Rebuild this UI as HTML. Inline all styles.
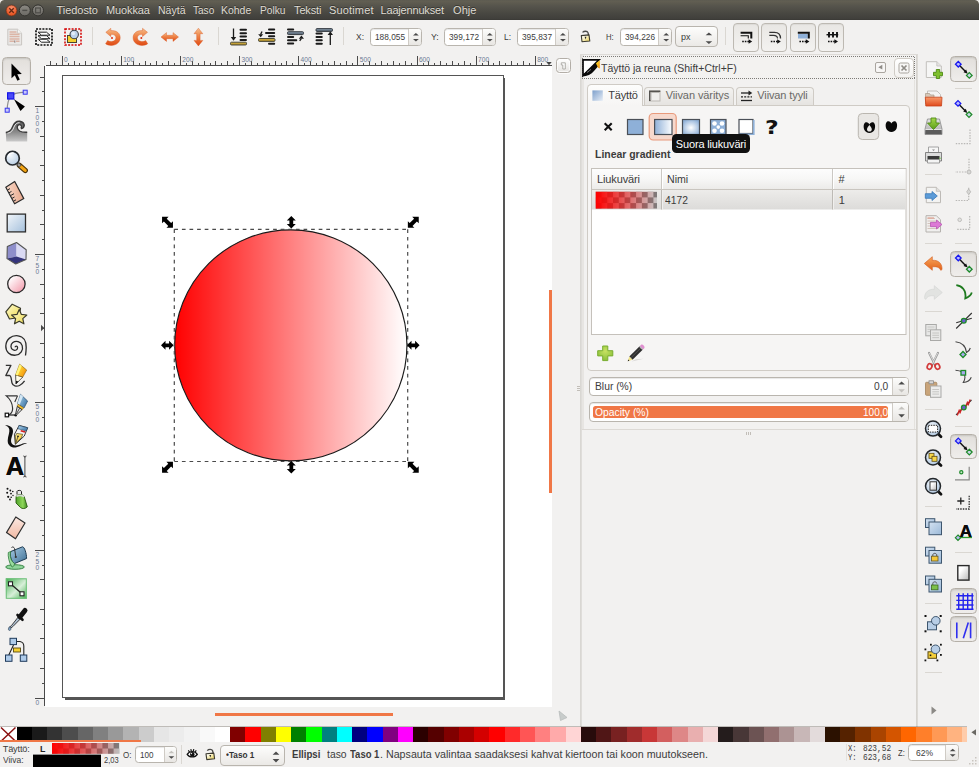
<!DOCTYPE html>
<html><head><meta charset="utf-8"><title>Inkscape</title>
<style>
*{box-sizing:border-box;margin:0;padding:0}
html,body{width:979px;height:767px;overflow:hidden}
body{background:#f2f1f0;font-family:"Liberation Sans","DejaVu Sans",sans-serif;font-size:11px;color:#3c3c3c;position:relative}
.a{position:absolute}
svg{position:absolute;overflow:visible}
.t{position:absolute;white-space:nowrap;line-height:1}
#titlebar{left:0;top:0;width:979px;height:20px;background:linear-gradient(#5d5b51 0%,#615e52 7%,#56544c 30%,#494842 65%,#403f3b 94%,#393834 100%)}
.menu{color:#dfdbd2;text-shadow:0 -1px 0 rgba(0,0,0,.5)}
.wb{position:absolute;width:12px;height:12px;border-radius:6px;top:5px}
.spin{position:absolute;background:#fff;border:1px solid #b9b5ae;border-radius:3.5px;box-shadow:inset 0 1px 1px rgba(0,0,0,.10)}
.spin .sp{position:absolute;right:0;top:0;bottom:0;width:12px;border-left:1px solid #cfcbc5;background:linear-gradient(#fcfcfb,#e8e6e3);border-radius:0 2.5px 2.5px 0}
.btn{position:absolute;border:1px solid #b5b0a8;border-radius:4px;background:linear-gradient(#e2dfdb,#efedeb);box-shadow:inset 0 1px 2px rgba(0,0,0,.13)}
.sep{position:absolute;background:#dad7d2;width:1px}
.hsep{position:absolute;background:#dad7d2;height:1px}
</style></head><body>

<div id="titlebar" class="a"></div>
<div class="a" style="left:0;top:0;width:4px;height:4px;background:radial-gradient(circle at 4px 4px,transparent 3.400px,#e8e6e2 4.200px)"></div>
<div class="a" style="right:0;top:0;width:4px;height:4px;background:radial-gradient(circle at 0 4px,transparent 3.400px,#e8e6e2 4.200px)"></div>
<svg style="left:0;top:0" width="60" height="20">
<defs><radialGradient id="wc" cx=".5" cy=".3" r=".75"><stop offset="0" stop-color="#f7916f"/><stop offset=".7" stop-color="#ea5a28"/><stop offset="1" stop-color="#dc4c1a"/></radialGradient>
<linearGradient id="wg" x1="0" y1="0" x2="0" y2="1"><stop offset="0" stop-color="#8b8983"/><stop offset="1" stop-color="#6b6964"/></linearGradient></defs>
<circle cx="11.500" cy="10.500" r="5.500" fill="url(#wc)" stroke="#5a3020" stroke-width="1" stroke-opacity=".75"/>
<path d="M9.300 8.300L13.700 12.700M13.700 8.300L9.300 12.700" stroke="#4a1a08" stroke-width="1.300" fill="none" stroke-opacity=".85"/>
<circle cx="24.800" cy="10.400" r="5.500" fill="url(#wg)" stroke="#34332f" stroke-width="1"/>
<path d="M22.300 10.400H27.300" stroke="#4e4d49" stroke-width="1.400" fill="none"/>
<circle cx="38" cy="10.400" r="5.500" fill="url(#wg)" stroke="#34332f" stroke-width="1"/>
<rect x="35.600" y="8" width="4.800" height="4.800" stroke="#4e4d49" stroke-width="1.200" fill="none"/>
</svg>
<span class="t" style="left:56.50px;top:5px;font-size:11px;letter-spacing:-0.042px;color:#dfdbd2;text-shadow:0 -1px 0 rgba(0,0,0,.4);">Tiedosto</span>
<span class="t" style="left:106.00px;top:5px;font-size:11px;letter-spacing:-0.107px;color:#dfdbd2;text-shadow:0 -1px 0 rgba(0,0,0,.4);">Muokkaa</span>
<span class="t" style="left:157.50px;top:5px;font-size:11px;transform:scaleX(0.9565);transform-origin:0 0;color:#dfdbd2;text-shadow:0 -1px 0 rgba(0,0,0,.4);">Näytä</span>
<span class="t" style="left:192.50px;top:5px;font-size:11px;transform:scaleX(0.9140);transform-origin:0 0;color:#dfdbd2;text-shadow:0 -1px 0 rgba(0,0,0,.4);">Taso</span>
<span class="t" style="left:221.25px;top:5px;font-size:11px;transform:scaleX(0.9509);transform-origin:0 0;color:#dfdbd2;text-shadow:0 -1px 0 rgba(0,0,0,.4);">Kohde</span>
<span class="t" style="left:259.50px;top:5px;font-size:11px;transform:scaleX(0.9262);transform-origin:0 0;color:#dfdbd2;text-shadow:0 -1px 0 rgba(0,0,0,.4);">Polku</span>
<span class="t" style="left:294.00px;top:5px;font-size:11px;letter-spacing:-0.125px;color:#dfdbd2;text-shadow:0 -1px 0 rgba(0,0,0,.4);">Teksti</span>
<span class="t" style="left:329.00px;top:5px;font-size:11px;letter-spacing:0.154px;color:#dfdbd2;text-shadow:0 -1px 0 rgba(0,0,0,.4);">Suotimet</span>
<span class="t" style="left:380.50px;top:5px;font-size:11px;letter-spacing:-0.178px;color:#dfdbd2;text-shadow:0 -1px 0 rgba(0,0,0,.4);">Laajennukset</span>
<span class="t" style="left:453.00px;top:5px;font-size:11px;letter-spacing:0.083px;color:#dfdbd2;text-shadow:0 -1px 0 rgba(0,0,0,.4);">Ohje</span>
<svg style="left:7px;top:28px" width="16" height="18" viewBox="0 0 16 18">
<path d="M0.8 1.2H10.5L14.6 5.2V17H0.8z" fill="#e9e7e5" stroke="#c9c6c2" stroke-width="1"/>
<path d="M10.5 1.2V5.2H14.6" fill="#f7f6f5" stroke="#c9c6c2" stroke-width=".8"/>
<path d="M2.5 4h7M2.5 6.3h10M2.5 8.6h10M2.5 10.9h10M2.5 13.2h5M9 13.2h3.5" stroke="#dcb5a6" stroke-width="1.5"/>
<path d="M7.8 12.5v2.2" stroke="#8a7a78" stroke-width="1"/>
</svg>
<svg style="left:35px;top:28px" width="18" height="18" viewBox="0 0 18 18">
<rect x="1" y="1" width="16" height="16" fill="none" stroke="#111" stroke-width="1.7" stroke-dasharray="2 1.2"/>
<g fill="#fff" stroke="#222" stroke-width="1"><path d="M3 11.2L11.5 11.2L15 14.2H6.5z"/><path d="M3 7.7L11.5 7.7L15 10.7H6.5z"/><path d="M3 4.2L11.5 4.2L15 7.2H6.5z"/></g>
</svg>
<svg style="left:63.5px;top:28px" width="18" height="18" viewBox="0 0 18 18">
<rect x="1" y="1" width="16" height="16" fill="none" stroke="#d40000" stroke-width="1.5" stroke-dasharray="2 1.3"/>
<rect x="3.5" y="7.5" width="9" height="7" fill="#f5cf2e" stroke="#4a4530" stroke-width="1"/>
<circle cx="10.2" cy="6.5" r="4.2" fill="#bcd3ea" stroke="#3b3f44" stroke-width="1.1"/>
<circle cx="9.3" cy="5.5" r="1.8" fill="#e2edf7"/>
</svg>
<div class="sep" style="left:91.5px;top:27px;height:18px"></div>
<svg style="left:0;top:0" width="360" height="56">
<defs><linearGradient id="og" x1="0" y1="0" x2="0" y2="1"><stop offset="0" stop-color="#f6c08d"/><stop offset=".45" stop-color="#ee8448"/><stop offset="1" stop-color="#df4a14"/></linearGradient></defs>
<g fill="url(#og)" stroke="#d9571f" stroke-width=".4">
<path id="rot" d="M105.8 32.3L110.8 28.3V30.6C117 30.2 120.3 33.6 120.2 37.8C120.1 42.6 115.8 45.6 111 45.4C108.6 45.3 106.7 44.6 105.6 43.7L107.6 40.6C109 41.4 110.2 41.7 111.6 41.6C114.3 41.4 116 39.7 115.9 37.6C115.8 35.4 114 34.1 110.8 34.4V36.6z"/>
<path d="M147.5 32.3L142.5 28.3V30.6C136.3 30.2 133 33.6 133.1 37.8C133.2 42.6 137.5 45.6 142.3 45.4C144.7 45.3 146.6 44.6 147.7 43.7L145.7 40.6C144.3 41.4 143.1 41.7 141.7 41.6C139 41.4 137.3 39.7 137.4 37.6C137.5 35.4 139.3 34.1 142.5 34.4V36.6z"/>
<path d="M161 37L166.5 32.6V35.3H173V32.6L178.5 37L173 41.4V38.7H166.5V41.4z"/>
<path d="M198.4 28.2L202.8 33.7H200.1V40.4H202.8L198.4 45.9L194 40.4H196.7V33.7H194z"/>
</g>
<circle cx="112" cy="38" r="1" fill="#e02b10"/><circle cx="141.300" cy="38" r="1" fill="#e02b10"/>
</svg>
<div class="sep" style="left:217.5px;top:27px;height:18px"></div>
<svg style="left:0;top:0" width="360" height="56">
<defs><linearGradient id="yb" x1="0" y1="0" x2="0" y2="1"><stop offset="0" stop-color="#d9b342"/><stop offset="1" stop-color="#a98a2c"/></linearGradient>
<linearGradient id="bb" x1="0" y1="0" x2="0" y2="1"><stop offset="0" stop-color="#8ea0b2"/><stop offset="1" stop-color="#4d5a68"/></linearGradient></defs>
<g stroke="#1a1a1a" stroke-width="2" stroke-linecap="round">
<path d="M240.5 29.8H246M240.5 33.2H246M240.5 36.6H246M240.5 40H246"/>
<path d="M269 29.600H274.200M266 33.100H274.200M269 36.200H274.200M269 43.800H274.200"/>
<path d="M288 29.600H293.200M288 37H293.200M288 40.200H296.300M288 43.400H293.200"/>
<path d="M316.500 33.5H321.800M316.500 36.900H321.800M316.500 40.300H321.800M316.500 43.700H321.800"/>
</g>
<g stroke="#1a1a1a" stroke-width="1.3" fill="#1a1a1a">
<path d="M233.500 28.500V38" fill="none"/><path d="M230.800 37L233.500 40.800L236.200 37z" stroke="none"/>
<path d="M330.300 45V34" fill="none"/><path d="M327.600 35L330.300 31.200L333 35z" stroke="none"/>
<path d="M258.200 34.300H263.200L260.700 37.300z" stroke="none"/><path d="M260.600 34.500L262 31.500" fill="none" stroke-width="1.300"/>
<path d="M298.800 38.800H304L301.400 35.600z" stroke="none"/><path d="M301.300 38.600L299.700 40.800" fill="none" stroke-width="1.300"/>
</g>
<rect x="230.500" y="42.200" width="16" height="2.800" rx="1" fill="url(#yb)" stroke="#3a3a30" stroke-width=".9"/>
<rect x="258.500" y="38.500" width="16.500" height="2.900" rx="1" fill="url(#yb)" stroke="#3a3a30" stroke-width=".9"/>
<rect x="287.500" y="31.700" width="16" height="2.900" rx="1" fill="url(#bb)" stroke="#2a3036" stroke-width=".9"/>
<rect x="316" y="28.600" width="16.500" height="2.800" rx="1" fill="url(#bb)" stroke="#2a3036" stroke-width=".9"/>
</svg>
<div class="sep" style="left:343px;top:27px;height:18px"></div>
<span class="t" style="left:356.30px;top:32px;font-size:9.6px;transform:scaleX(0.8812);transform-origin:0 0;">X:</span>
<div class="spin" style="left:370px;top:28.3px;width:52.3px;height:17.4px;border-radius:3.5px"><div class="sp" style="width:13px"></div><svg style="left:-1px;top:-1px" width="52.3" height="17.4"><path d="M43.0 7.5L45.9 5.0L48.8 7.5z" fill="#4a4a4a"/><path d="M43.0 11.0L45.9 13.5L48.8 11.0z" fill="#4a4a4a"/></svg></div>
<span class="t" style="left:375.20px;top:32px;font-size:9.6px;transform:scaleX(0.8649);transform-origin:0 0;">188,055</span>
<span class="t" style="left:430.50px;top:32px;font-size:9.6px;transform:scaleX(0.9126);transform-origin:0 0;">Y:</span>
<div class="spin" style="left:443.5px;top:28.3px;width:52.2px;height:17.4px;border-radius:3.5px"><div class="sp" style="width:13px"></div><svg style="left:-1px;top:-1px" width="52.2" height="17.4"><path d="M42.9 7.5L45.8 5.0L48.7 7.5z" fill="#4a4a4a"/><path d="M42.9 11.0L45.8 13.5L48.7 11.0z" fill="#4a4a4a"/></svg></div>
<span class="t" style="left:448.60px;top:32px;font-size:9.6px;transform:scaleX(0.8649);transform-origin:0 0;">399,172</span>
<span class="t" style="left:504.00px;top:32px;font-size:9.6px;transform:scaleX(0.8733);transform-origin:0 0;">L:</span>
<div class="spin" style="left:516.7px;top:28.3px;width:52.3px;height:17.4px;border-radius:3.5px"><div class="sp" style="width:13px"></div><svg style="left:-1px;top:-1px" width="52.3" height="17.4"><path d="M43.0 7.5L45.9 5.0L48.8 7.5z" fill="#4a4a4a"/><path d="M43.0 11.0L45.9 13.5L48.8 11.0z" fill="#4a4a4a"/></svg></div>
<span class="t" style="left:521.80px;top:32px;font-size:9.6px;transform:scaleX(0.8649);transform-origin:0 0;">395,837</span>
<svg style="left:0;top:0" width="979" height="56">
<defs><linearGradient id="lk" x1="0" y1="0" x2="1" y2="1"><stop offset=".2" stop-color="#fffef2"/><stop offset="1" stop-color="#e9cf4e"/></linearGradient></defs>
<path d="M582.500 32.400C584 30.900 587.300 30.700 588 32.600L588.700 35.500" fill="none" stroke="#4a4a48" stroke-width="1.300"/>
<path d="M581.300 35.600L589 34.900L589.800 41L582 41.800z" fill="url(#lk)" stroke="#3c3a30" stroke-width="1.100" stroke-linejoin="round"/>
<path d="M584.600 36.800H586.400L585.700 39.600z" fill="#222"/>
</svg>
<span class="t" style="left:606.30px;top:32px;font-size:9.6px;transform:scaleX(0.8026);transform-origin:0 0;">H:</span>
<div class="spin" style="left:619.8px;top:28.3px;width:52.6px;height:17.4px;border-radius:3.5px"><div class="sp" style="width:13px"></div><svg style="left:-1px;top:-1px" width="52.6" height="17.4"><path d="M43.3 7.5L46.2 5.0L49.1 7.5z" fill="#4a4a4a"/><path d="M43.3 11.0L46.2 13.5L49.1 11.0z" fill="#4a4a4a"/></svg></div>
<span class="t" style="left:624.80px;top:32px;font-size:9.6px;transform:scaleX(0.8649);transform-origin:0 0;">394,226</span>
<div class="a" style="left:675.300px;top:26.300px;width:43px;height:21px;border:1px solid #b9b5ae;border-radius:4px;background:linear-gradient(#fdfdfc,#ebe9e6)"></div>
<span class="t" style="left:681.00px;top:32px;font-size:9.6px;transform:scaleX(0.9368);transform-origin:0 0;">px</span>
<svg style="left:705px;top:30px" width="8" height="15"><path d="M0.600 5.300L3.900 2.400L7.200 5.300zM0.600 11.300L3.900 13.900L7.200 11.300z" fill="#4c4c4c"/></svg>
<div class="sep" style="left:725px;top:27px;height:18px"></div>
<div class="btn" style="left:732.6px;top:22.5px;width:26px;height:29px;background:linear-gradient(#e9e7e4,#f3f2f0);box-shadow:inset 0 1px 1px rgba(0,0,0,.06);border-color:#bdb9b2"></div>
<div class="btn" style="left:761.2px;top:22.5px;width:26px;height:29px;background:linear-gradient(#e9e7e4,#f3f2f0);box-shadow:inset 0 1px 1px rgba(0,0,0,.06);border-color:#bdb9b2"></div>
<div class="btn" style="left:789.8px;top:22.5px;width:26px;height:29px;background:linear-gradient(#e9e7e4,#f3f2f0);box-shadow:inset 0 1px 1px rgba(0,0,0,.06);border-color:#bdb9b2"></div>
<div class="btn" style="left:818.4px;top:22.5px;width:26px;height:29px;background:linear-gradient(#e9e7e4,#f3f2f0);box-shadow:inset 0 1px 1px rgba(0,0,0,.06);border-color:#bdb9b2"></div>
<svg style="left:0;top:0" width="979" height="56"><g fill="none" stroke="#111">
<path d="M740.600 32.800H751.300V38.500" stroke-width="2"/><path d="M740.600 35.800H748.300V38.500" stroke-width="1.100"/><path d="M742.2 41.500H749.2" stroke-width="1.300" stroke-dasharray="1.600 1"/><path d="M748.6 39.200L752.2 41.500L748.6 43.800z" fill="#111" stroke="none"/>
<path d="M769.300 32.400H774.500C778.500 32.400 780.500 34.500 780.500 38.500" stroke-width="1.300" stroke="#333"/><path d="M769.300 35.400H773.500C776.500 35.400 777.500 36.500 777.500 38.500" stroke-width="1.100" stroke="#333"/><path d="M770.8 41.500H777.8" stroke-width="1.300" stroke-dasharray="1.600 1"/><path d="M777.1999999999999 39.200L780.8 41.500L777.1999999999999 43.800z" fill="#111" stroke="none"/>
<rect x="798" y="34" width="9.800" height="4.500" fill="#8fb0d8" stroke="none"/><path d="M797.800 32.800H808.800V38.500" stroke-width="2"/><path d="M799.4 41.500H806.4" stroke-width="1.300" stroke-dasharray="1.600 1"/><path d="M805.8 39.200L809.4 41.500L805.8 43.800z" fill="#111" stroke="none"/>
<path d="M826.500 34.700H838.200" stroke-width="1.400"/><path d="M829 32V37.500M833 32V37.500M837 32V37.500" stroke-width="1.900"/><path d="M828 41.500H835" stroke-width="1.300" stroke-dasharray="1.600 1"/><path d="M834.4 39.200L838 41.500L834.4 43.800z" fill="#111" stroke="none"/>
</g></svg>
<div class="btn" style="left:2px;top:56.5px;width:28.5px;height:28.3px;border-radius:4.5px"></div>
<svg style="left:0;top:0" width="40" height="680">
<defs>
<linearGradient id="tw" x1="0" y1="0" x2="0" y2="1"><stop offset="0" stop-color="#5a5a5a"/><stop offset=".55" stop-color="#8c8c8c"/><stop offset="1" stop-color="#cacaca"/></linearGradient>
<radialGradient id="lens" cx=".35" cy=".3" r=".8"><stop offset="0" stop-color="#f4f8fc"/><stop offset="1" stop-color="#b5cbe2"/></radialGradient>
<linearGradient id="rc" x1="0" y1="0" x2="1" y2="1"><stop offset="0" stop-color="#f2f6fa"/><stop offset="1" stop-color="#a4c0dc"/></linearGradient>
<linearGradient id="ci" x1="0" y1="0" x2="1" y2="1"><stop offset=".15" stop-color="#fff"/><stop offset="1" stop-color="#f291a4"/></linearGradient>
<linearGradient id="st" x1="0" y1="0" x2="1" y2="1"><stop offset="0" stop-color="#fffbd0"/><stop offset="1" stop-color="#ecd94e"/></linearGradient>
<linearGradient id="ms" x1="0" y1="0" x2="1" y2="0"><stop offset="0" stop-color="#f6d8c8"/><stop offset="1" stop-color="#eaa88c"/></linearGradient>
<linearGradient id="er" x1="0" y1="0" x2="0" y2="1"><stop offset="0" stop-color="#fbe9e2"/><stop offset="1" stop-color="#f0b8a2"/></linearGradient>
<linearGradient id="gr" x1="0" y1="0" x2="1" y2="1"><stop offset="0" stop-color="#3fae4c"/><stop offset=".55" stop-color="#d8efd9"/><stop offset="1" stop-color="#45b152"/></linearGradient>
<linearGradient id="bk" x1="0" y1="0" x2="1" y2="1"><stop offset="0" stop-color="#a8cce4"/><stop offset="1" stop-color="#3d6f95"/></linearGradient>
<linearGradient id="sp" x1="0" y1="0" x2="1" y2="0"><stop offset="0" stop-color="#4fa32a"/><stop offset=".6" stop-color="#8fd65a"/><stop offset="1" stop-color="#3c8a1e"/></linearGradient>
<linearGradient id="pcl" x1="0" y1="0" x2="1" y2=".6"><stop offset=".2" stop-color="#ffe93a"/><stop offset="1" stop-color="#f5920e"/></linearGradient>
<linearGradient id="pnb" x1="0" y1="0" x2="1" y2=".7"><stop offset="0" stop-color="#b5d8ee"/><stop offset="1" stop-color="#3f78a8"/></linearGradient>
<linearGradient id="nibg" x1="0" y1="0" x2="1" y2="1"><stop offset="0" stop-color="#fff6a0"/><stop offset="1" stop-color="#f0b414"/></linearGradient>
</defs>
<!-- select -->
<path d="M11.5 63.6V78.200L14.800 75.200L17.400 80.700L19.800 79.500L17.300 74.200L21.800 74z" fill="#000"/>
<!-- node -->
<path d="M25.300 92.200C17 92.500 12.500 94 10.500 96.500C8 100 7.300 104 7.200 110" fill="none" stroke="#8d8d8d" stroke-width="1.200"/>
<path d="M13.800 99L24.900 106.600L20.500 111z" fill="#000"/>
<rect x="7.600" y="92.800" width="6.200" height="6.200" fill="#4a4af5" stroke="#1414e8" stroke-width="1.200"/>
<rect x="23.200" y="90.200" width="4" height="4" fill="#c9c9fa" stroke="#3636f0" stroke-width="1"/>
<rect x="5.200" y="108.200" width="4" height="4" fill="#c9c9fa" stroke="#3636f0" stroke-width="1"/>
<!-- tweak -->
<path d="M5.800 132.400C10 132.300 11.500 130 12.800 126.500C14.300 122.500 17 120.900 19.800 121.200C23 121.500 24.700 124 23.900 126.600C23.400 128.100 22 128.700 20.900 128.200C22 127 21.700 125 20 124.700C18 124.400 17 126 17.300 128C17.800 130.800 21 132.500 27.200 132.200V141.500H6.300z" fill="url(#tw)"/>
<path d="M5.800 132.400C10 132.300 11.500 130 12.800 126.500C14.300 122.500 17 120.900 19.800 121.200C23 121.500 24.700 124 23.900 126.600C23.400 128.100 22 128.700 20.900 128.200" fill="none" stroke="#3a3a3a" stroke-width="1.500"/>
<path d="M7.500 133.200C11.300 132.800 12.800 130.300 14 127C15.200 123.800 17.300 122.600 19.600 122.700" fill="none" stroke="#f0f0f0" stroke-width=".9"/>
<path d="M20.900 128.200C22 127 21.700 125 20 124.700C18 124.400 17 126 17.300 128C17.800 130.800 21 132.500 27.200 132.200" fill="none" stroke="#3a3a3a" stroke-width="1.400"/>
<!-- zoom -->
<path d="M19.300 165.200L25.300 170.500" stroke="#4a3208" stroke-width="5.200" stroke-linecap="round"/>
<path d="M20.300 166.100L25.200 170.400" stroke="#f3a413" stroke-width="3.200" stroke-linecap="round"/>
<path d="M18.600 162.800L16.800 165L19.300 167.200L21.200 165z" fill="#9a9a9a" stroke="#333" stroke-width=".7"/>
<circle cx="12.500" cy="158.200" r="6.800" fill="url(#lens)" stroke="#272b30" stroke-width="1.700"/>
<path d="M8.500 156C9.300 153.800 11.500 152.800 13.500 153" stroke="#fff" stroke-width="1.200" fill="none" stroke-linecap="round"/>
<!-- measure -->
<path d="M5.800 187.200L14.700 181.500L23.800 198.600L14.600 203.800z" fill="url(#ms)" stroke="#2a2a2a" stroke-width="1.200" stroke-linejoin="round"/>
<path d="M7.500 190L10 188.600M9 192.800L11.500 191.400M10.500 195.600L14 193.700M12 198.400L14.500 197M13.500 201.200L16 199.800" stroke="#2a2a2a" stroke-width="1"/>
<!-- rect -->
<rect x="7.200" y="214.100" width="18.300" height="17.800" fill="url(#rc)" stroke="#2e2e2e" stroke-width="1.300"/>
<!-- 3d box -->
<path d="M7.300 246.500L16.500 242.500L16.500 256.500L7 258.600z" fill="#8e8ecb"/>
<path d="M16.500 242.500L26.200 249.800L26 259.500L16.500 256.500z" fill="#dadaf4"/>
<path d="M7 258.600L16.500 256.500L26 259.500L15.700 264z" fill="#34347c"/>
<path d="M7.300 246.500L16.500 242.500L26.200 249.800L26 259.500L15.700 264L7 258.600z" fill="none" stroke="#555" stroke-width="1.100" stroke-linejoin="round"/>
<!-- ellipse -->
<circle cx="16.400" cy="284" r="8.700" fill="url(#ci)" stroke="#2a2a2a" stroke-width="1.300"/>
<!-- star -->
<path d="M5.800 311.800L12.200 304.200L20.500 308.300L19 317.500L9.500 319z" fill="url(#st)" stroke="#3a3a2a" stroke-width="1.200" stroke-linejoin="round"/>
<path d="M19.200 309.600L21.400 314.400L26.800 315L22.800 318.600L23.900 323.800L19.200 321.200L14.500 323.800L15.600 318.600L11.600 315L17 314.400z" fill="url(#st)" stroke="#3a3a2a" stroke-width="1.200" stroke-linejoin="round"/>
<!-- spiral -->
<path d="M15.200 347.200C15.200 345.800 17.400 345.800 17.600 347.600C17.800 349.800 15.200 351 13 349.800C10.400 348.400 10.200 344.600 12.800 342.600C16 340.200 20.800 341.400 22.200 345.600C23.600 350 20.600 354.600 15.600 355.200C9.800 355.800 5.600 351.600 5.800 346C6 339.400 11.400 335 18 335.800C23.400 336.400 26.400 341 26.200 347.600C26.100 351 25.800 353.500 25.500 355.500" fill="none" stroke="#2a2a2a" stroke-width="1.300"/>
<!-- pencil -->
<path d="M5.800 365.400H10.900L5.800 375.500H9.500C11.500 375.700 11.300 380.500 12 383C12.800 386 16.500 387 19.500 385.500C21.800 384.300 23.500 382.500 24.600 380.900" fill="none" stroke="#333" stroke-width="1.300" stroke-linejoin="round"/>
<path d="M15.600 374.800L22.800 377L15.900 384z" fill="#fffbe8" stroke="#333" stroke-width=".8" stroke-linejoin="round"/>
<path d="M19.600 364.200L26.700 370L22.800 377L15.600 374.800z" fill="url(#pcl)" stroke="#7a5a10" stroke-width=".6" stroke-linejoin="round"/>
<path d="M19.600 364.200L21.800 366L17.800 375.500L15.600 374.800z" fill="#fff47a"/>
<path d="M15.900 384L16 380.800L18.500 381.600z" fill="#111"/>
<!-- bezier pen -->
<path d="M17.500 395.900H6.300C10 399 12.300 403 12.600 408C12.800 411.500 11.500 413.500 9.200 414.700" fill="none" stroke="#333" stroke-width="1.200"/>
<path d="M17.500 395.900L14.800 402" fill="none" stroke="#333" stroke-width="1.100"/>
<path d="M8.500 415H15" stroke="#222" stroke-width="1.200"/>
<rect x="5.200" y="413.200" width="3.400" height="3.600" fill="#fff" stroke="#111" stroke-width="1.200"/>
<circle cx="15.700" cy="415.200" r="1.300" fill="#111"/>
<path d="M20.500 394.300L27.600 401L24 408L17.500 403.500z" fill="url(#pnb)" stroke="#2a4a6a" stroke-width=".7" stroke-linejoin="round"/>
<path d="M20.500 394.300L23 396.600L19.500 405L17.500 403.500z" fill="#d4e8f5"/>
<path d="M18 404.200L23.500 407.800L22.300 409.800L17 406.200z" fill="#f6c12a" stroke="#6a5010" stroke-width=".5"/>
<path d="M17.300 406.500L22 409.600L16.500 415L15.500 414.300z" fill="#e4e4e4" stroke="#222" stroke-width=".9" stroke-linejoin="round"/>
<path d="M19.600 408.200L16.200 414.300" stroke="#222" stroke-width=".8"/>
<!-- calligraphy -->
<path d="M5 425.300C9.500 425 13.300 427.300 13 431.500C12.700 435.500 10.300 439 11.300 442.500C12.300 445.800 16 446 19.500 444.800C22.500 443.800 24.500 442.600 27 443.200C23.500 443.600 21 446.300 16.500 447.300C11.500 448.300 7.500 445.500 7.700 440.500C7.900 436 9.800 432.500 9.300 429.500C8.900 427.300 7.300 426 5 425.300z" fill="#111"/>
<path d="M19.200 425.400L27.600 427.700L24.300 436L15.300 444.300L14.500 434.200z" fill="#f4f4f4" stroke="#222" stroke-width=".9" stroke-linejoin="round"/>
<path d="M16.700 433.400L22.700 434.300L21.500 437.500L15.600 443.600L15.400 436.200z" fill="url(#nibg)" stroke="#3a3000" stroke-width=".6" stroke-linejoin="round"/>
<path d="M18.800 425.600L27.700 427.800L26.400 431L18 428.800z" fill="url(#pnb)" stroke="#1a3a5a" stroke-width=".5"/>
<path d="M20.900 430L25.600 431.300L24.700 432.700L20.500 431.500z" fill="#d42020"/>
<circle cx="18" cy="436.300" r=".9" fill="#111"/><path d="M17.800 437L16 442.300" stroke="#222" stroke-width=".7"/>
<!-- text: see span -->
<path d="M24.900 456.300V476.800M23.300 456C24.300 456 24.900 456.500 24.900 457.300C24.900 456.500 25.500 456 26.500 456M23.300 477C24.300 477 24.900 476.500 24.900 475.700C24.900 476.500 25.500 477 26.500 477" stroke="#333" stroke-width=".9" fill="none"/>
<!-- spray -->
<g fill="#111"><circle cx="7.500" cy="488.800" r="1"/><circle cx="10.300" cy="490.500" r=".9"/><circle cx="7.200" cy="492.800" r="1"/><circle cx="11" cy="493.600" r=".9"/><circle cx="8.200" cy="496.800" r="1.100"/><circle cx="11.200" cy="497.200" r=".8"/><circle cx="12.800" cy="491.500" r=".8"/><circle cx="10" cy="499.500" r=".9"/><circle cx="13" cy="495.500" r=".7"/></g>
<path d="M17 494.500V491.500C17 490 21.500 490 21.500 491.500V494.500" fill="#e8e8e8" stroke="#222" stroke-width="1"/>
<path d="M16 497.500C16 493.500 23.300 493.500 24.300 497L27.300 506.800C25.500 509 22 509 20.500 507.500L16 503z" fill="url(#sp)" stroke="#2a5a12" stroke-width=".9"/>
<path d="M16.500 496.500C18.500 494.800 22.500 495 24 497" fill="none" stroke="#d8d8d8" stroke-width="1.600"/>
<!-- eraser -->
<path d="M15.800 517L25 523L15.500 538.800L6.500 532.600z" fill="url(#er)" stroke="#2e2e2e" stroke-width="1.200" stroke-linejoin="round"/>
<!-- bucket -->
<ellipse cx="15" cy="567" rx="9.300" ry="2.300" fill="#8fd49a" stroke="#2e7a3c" stroke-width=".9"/>
<path d="M10.800 551.500L22.500 546.800C24.500 547 26.500 553 26.600 558.500L14.600 563.500C11.500 562 9.500 556 10.800 551.500z" fill="url(#bk)" stroke="#1e3a50" stroke-width="1"/>
<path d="M10.800 551.500C9.300 555 10.800 561.500 14.600 563.500C14.300 566 13 567 12 567C9 563 7.800 556 8.300 552.500z" fill="#9bdc9f" stroke="#2e7a3c" stroke-width=".8"/>
<path d="M11.500 547.500C12.500 546.500 14 547 14.500 548.500L15.800 556.800" fill="none" stroke="#333" stroke-width="1"/>
<circle cx="15.800" cy="557" r="1.100" fill="#333"/>
<!-- gradient -->
<rect x="5.800" y="578.300" width="21" height="20.500" fill="url(#gr)"/>
<rect x="6.300" y="578.800" width="20" height="19.500" fill="none" stroke="#6fc07a" stroke-width="1"/>
<path d="M10.500 583.800L22 593.800" stroke="#222" stroke-width="1.300"/>
<rect x="8.500" y="581.800" width="4" height="4" fill="#fff" stroke="#222" stroke-width="1.100"/>
<rect x="20" y="591.800" width="4" height="4" fill="#fff" stroke="#222" stroke-width="1.100"/>
<!-- dropper -->
<path d="M19 616L11.500 625.500L9.300 627.300L10.500 628.300L12.800 626.600L21.300 618z" fill="#aebfd0" stroke="#2a2a2a" stroke-width=".9"/>
<path d="M9.300 626.800C8 628.500 8 630.300 9.500 630.500C11 630.600 11.300 628.500 10.300 627.300z" fill="#7f9fc0" stroke="#345" stroke-width=".6"/>
<path d="M17.500 615L22.500 619.800" stroke="#111" stroke-width="2.600" stroke-linecap="round"/>
<path d="M20 616.800L25 610.500" stroke="#111" stroke-width="5" stroke-linecap="round"/>
<!-- connector -->
<path d="M13.500 641.500H20C22.500 642 23.800 644 23.800 646V655M13.500 645L8.800 655" fill="none" stroke="#222" stroke-width="1.100"/>
<rect x="10" y="638.300" width="6.500" height="6.300" fill="#aecbea" stroke="#1e3a5a" stroke-width="1"/>
<rect x="5.500" y="655" width="6.500" height="6.300" fill="#aecbea" stroke="#1e3a5a" stroke-width="1"/>
<rect x="20.300" y="655" width="6.500" height="6.300" fill="#aecbea" stroke="#1e3a5a" stroke-width="1"/>
<rect x="13.500" y="648" width="7" height="4" fill="#f5cf2e" stroke="#5a4a10" stroke-width=".9"/>
</svg>
<span class="t" style="left:5.60px;top:454px;font-size:25.4px;font-weight:700;color:#0a0a0a;text-shadow:0.4px 0 0 #0a0a0a;">A</span>
<div class="a" style="left:45px;top:65px;width:507px;height:641.5px;background:#fff"></div>
<div class="a" style="left:62px;top:75px;width:441.700px;height:623.400px;border:1.150px solid #555;background:#fff"></div>
<div class="a" style="left:503.500px;top:77.500px;width:1.500px;height:622.500px;background:#555"></div>
<div class="a" style="left:64.500px;top:698.200px;width:440.500px;height:1.700px;background:#555"></div>
<svg style="left:0;top:0" width="979" height="767" shape-rendering="crispEdges"><path d="M46 65.5H552" stroke="#4a4a4a" stroke-width="1" fill="none"/><path d="M44.5 66V706" stroke="#4a4a4a" stroke-width="1" fill="none"/><path d="M50.5 61V65 M56.5 63V65 M62.5 56V65 M68.5 63V65 M74.5 61V65 M79.5 63V65 M85.5 61V65 M91.5 63V65 M97.5 61V65 M103.5 63V65 M109.5 61V65 M115.5 63V65 M121.5 56V65 M127.5 63V65 M133.5 61V65 M139.5 63V65 M145.5 61V65 M150.5 63V65 M156.5 61V65 M162.5 63V65 M168.5 61V65 M174.5 63V65 M180.5 56V65 M186.5 63V65 M192.5 61V65 M198.5 63V65 M204.5 61V65 M210.5 63V65 M215.5 61V65 M221.5 63V65 M227.5 61V65 M233.5 63V65 M239.5 56V65 M245.5 63V65 M251.5 61V65 M257.5 63V65 M263.5 61V65 M269.5 63V65 M275.5 61V65 M281.5 63V65 M286.5 61V65 M292.5 63V65 M298.5 56V65 M304.5 63V65 M310.5 61V65 M316.5 63V65 M322.5 61V65 M328.5 63V65 M334.5 61V65 M340.5 63V65 M346.5 61V65 M352.5 63V65 M357.5 56V65 M363.5 63V65 M369.5 61V65 M375.5 63V65 M381.5 61V65 M387.5 63V65 M393.5 61V65 M399.5 63V65 M405.5 61V65 M411.5 63V65 M417.5 56V65 M423.5 63V65 M428.5 61V65 M434.5 63V65 M440.5 61V65 M446.5 63V65 M452.5 61V65 M458.5 63V65 M464.5 61V65 M470.5 63V65 M476.5 56V65 M482.5 63V65 M488.5 61V65 M493.5 63V65 M499.5 61V65 M505.5 63V65 M511.5 61V65 M517.5 63V65 M523.5 61V65 M529.5 63V65 M535.5 56V65 M541.5 63V65 M35 698.5H44 M42 683.5H44 M40 668.5H44 M42 653.5H44 M40 638.5H44 M42 624.5H44 M40 609.5H44 M42 594.5H44 M40 579.5H44 M42 565.5H44 M35 550.5H44 M42 535.5H44 M40 520.5H44 M42 505.5H44 M40 491.5H44 M42 476.5H44 M40 461.5H44 M42 446.5H44 M40 431.5H44 M42 417.5H44 M35 402.5H44 M42 387.5H44 M40 372.5H44 M42 357.5H44 M40 343.5H44 M42 328.5H44 M40 313.5H44 M42 298.5H44 M40 284.5H44 M42 269.5H44 M35 254.5H44 M42 239.5H44 M40 224.5H44 M42 210.5H44 M40 195.5H44 M42 180.5H44 M40 165.5H44 M42 150.5H44 M40 136.5H44 M42 121.5H44 M35 106.5H44 M42 91.5H44 M40 77.5H44" stroke="#4a4a4a" stroke-width="1" fill="none"/></svg>
<span class="t" style="left:64.0px;top:57.3px;font-size:6.6px;color:#6b7a94">0</span>
<span class="t" style="left:123.2px;top:57.3px;font-size:6.6px;color:#6b7a94">100</span>
<span class="t" style="left:182.3px;top:57.3px;font-size:6.6px;color:#6b7a94">200</span>
<span class="t" style="left:241.5px;top:57.3px;font-size:6.6px;color:#6b7a94">300</span>
<span class="t" style="left:300.6px;top:57.3px;font-size:6.6px;color:#6b7a94">400</span>
<span class="t" style="left:359.8px;top:57.3px;font-size:6.6px;color:#6b7a94">500</span>
<span class="t" style="left:418.9px;top:57.3px;font-size:6.6px;color:#6b7a94">600</span>
<span class="t" style="left:478.1px;top:57.3px;font-size:6.6px;color:#6b7a94">700</span>
<span class="t" style="left:537.2px;top:57.3px;font-size:6.6px;color:#6b7a94">800</span>
<span class="t" style="left:35.400px;top:700.0px;font-size:6.600px;color:#6b7a94">0</span>
<span class="t" style="left:35.400px;top:552.0px;font-size:6.600px;color:#6b7a94">2</span>
<span class="t" style="left:35.400px;top:558.6px;font-size:6.600px;color:#6b7a94">5</span>
<span class="t" style="left:35.400px;top:565.2px;font-size:6.600px;color:#6b7a94">0</span>
<span class="t" style="left:35.400px;top:404.0px;font-size:6.600px;color:#6b7a94">5</span>
<span class="t" style="left:35.400px;top:410.6px;font-size:6.600px;color:#6b7a94">0</span>
<span class="t" style="left:35.400px;top:417.2px;font-size:6.600px;color:#6b7a94">0</span>
<span class="t" style="left:35.400px;top:256.0px;font-size:6.600px;color:#6b7a94">7</span>
<span class="t" style="left:35.400px;top:262.6px;font-size:6.600px;color:#6b7a94">5</span>
<span class="t" style="left:35.400px;top:269.2px;font-size:6.600px;color:#6b7a94">0</span>
<span class="t" style="left:35.400px;top:108.0px;font-size:6.600px;color:#6b7a94">1</span>
<span class="t" style="left:35.400px;top:114.6px;font-size:6.600px;color:#6b7a94">0</span>
<span class="t" style="left:35.400px;top:121.2px;font-size:6.600px;color:#6b7a94">0</span>
<span class="t" style="left:35.400px;top:127.8px;font-size:6.600px;color:#6b7a94">0</span>
<svg style="left:545px;top:59px" width="8" height="7"><path d="M1.300 3H6.700L4 6.200z" fill="#444"/></svg>
<svg style="left:39px;top:323.200px" width="7" height="10"><path d="M2 1.800L5.300 5L2 8.200z" fill="#4a4a4a"/></svg>
<svg style="left:0;top:0" width="979" height="767">
<defs><linearGradient id="cg" x1="0" y1="0" x2="1" y2="0"><stop offset="0" stop-color="#ff0000"/><stop offset="1" stop-color="#ff0000" stop-opacity="0"/></linearGradient></defs>
<ellipse cx="290.800" cy="345.350" rx="116.150" ry="115.550" fill="url(#cg)" stroke="#1a1a1a" stroke-width="1.150"/>
<path d="M174.300 229.300H407.700M174.300 461.500H407.700M174.300 229.300V461.500M407.700 229.300V461.500" fill="none" stroke="#4a4a4a" stroke-width="1.200" stroke-dasharray="3.700 3.900"/>
<g fill="#000">

<path transform="translate(167.5 222.3) rotate(45)" d="M-7.700 0L-3.100 -4.600V-2H3.100V-4.600L7.700 0L3.100 4.600V2H-3.100V4.600z"/>
<path transform="translate(413.3 222.3) rotate(135)" d="M-7.700 0L-3.100 -4.600V-2H3.100V-4.600L7.700 0L3.100 4.600V2H-3.100V4.600z"/>
<path transform="translate(167.5 467.3) rotate(135)" d="M-7.700 0L-3.100 -4.600V-2H3.100V-4.600L7.700 0L3.100 4.600V2H-3.100V4.600z"/>
<path transform="translate(413.3 467.3) rotate(45)" d="M-7.700 0L-3.100 -4.600V-2H3.100V-4.600L7.700 0L3.100 4.600V2H-3.100V4.600z"/>
<path transform="translate(291.3 222.2) rotate(90)" d="M-6.300 0L-1.800 -4.500V-1.900H1.800V-4.500L6.300 0L1.800 4.500V1.900H-1.800V4.500z"/>
<path transform="translate(291.3 467.2) rotate(90)" d="M-6.300 0L-1.800 -4.500V-1.900H1.800V-4.500L6.300 0L1.800 4.500V1.900H-1.800V4.500z"/>
<path transform="translate(167.3 345.3) rotate(0)" d="M-6.300 0L-1.800 -4.500V-1.900H1.800V-4.500L6.300 0L1.800 4.500V1.900H-1.800V4.500z"/>
<path transform="translate(413.3 345.3) rotate(0)" d="M-6.300 0L-1.800 -4.500V-1.900H1.800V-4.500L6.300 0L1.800 4.500V1.900H-1.800V4.500z"/>
</g></svg>
<div class="a" style="left:549px;top:290px;width:3px;height:203px;background:#f07746"></div>
<div class="a" style="left:214.5px;top:713.3px;width:178px;height:2.7px;background:#f07746"></div>
<div class="a" style="left:556px;top:58.300px;width:14.500px;height:14.500px;border:1px solid #b3aea7;border-radius:3.500px;background:linear-gradient(#fff,#e6e4e1);box-shadow:0 1px 0 rgba(255,255,255,.8),inset 0 0 0 1px rgba(255,255,255,.7)"></div>
<svg style="left:556px;top:58.300px" width="15" height="15"><path d="M5.300 4.800H9.300V11H6.800V7H5.300z" fill="#fbfbfb" stroke="#a9a7a3" stroke-width=".9"/></svg>
<svg style="left:556px;top:709px" width="14" height="14"><path d="M3 2L11 8.5L4.5 11.5z" fill="#c8cccb" stroke="#b9bcbb" stroke-width=".8"/></svg>
<svg style="left:575.5px;top:385px" width="5" height="8"><path d="M0.5 1.5H4M0.5 3.5H4M0.5 5.5H4" stroke="#c2beb8" stroke-width="1" shape-rendering="crispEdges"/></svg>
<div class="a" style="left:580px;top:54px;width:2px;height:672.5px;background:linear-gradient(90deg,#d6d4d0,#e2e0dd)"></div>
<div class="a" style="left:582px;top:54px;width:1.5px;height:375px;background:#e7e5e2"></div>
<div class="a" style="left:915.5px;top:54px;width:2px;height:672.5px;background:linear-gradient(90deg,#d2cfca,#e0deda)"></div>
<div class="a" style="left:914px;top:80px;width:1px;height:349px;background:#e4e2de"></div>
<div class="a" style="left:582px;top:428.5px;width:333.5px;height:1px;background:#dcd9d5"></div>
<div class="a" style="left:580px;top:53.800px;width:337.500px;height:1px;background:#dddad6"></div>
<svg style="left:582px;top:56px" width="334" height="24"><rect x="0.500" y="0.500" width="332" height="22" fill="#f3f2f0" stroke="#7d7b77" stroke-width="1" stroke-dasharray="1 1" shape-rendering="crispEdges"/></svg>
<svg style="left:582px;top:59px" width="18" height="18" viewBox="0 0 18 18">
<defs><linearGradient id="tip" x1="0" y1="0" x2="1" y2="1"><stop offset="0" stop-color="#ffe61e"/><stop offset="1" stop-color="#f28a1a"/></linearGradient></defs>
<path d="M1 0.900H17L1 16.500z" fill="#fff" stroke="#0a0a0a" stroke-width="1.700" stroke-linejoin="miter"/>
<path d="M0.300 17.500C2.500 13.300 6 11.800 8.800 9.300L14.300 3.500L17 6.300L12 12C9.500 15.300 5 17.300 0.300 17.500z" fill="#0a0a0a"/>
<path d="M5 13.500C6.500 12.300 8 11.500 9 10.300" stroke="#8a8a8a" stroke-width=".9" fill="none"/>
<path d="M14 4.300L17.800 1.300V9.500L16 8.800z" fill="url(#tip)"/>
</svg>
<span class="t" style="left:601.30px;top:63px;font-size:11px;transform:scaleX(0.9526);transform-origin:0 0;">Täyttö ja reuna (Shift+Ctrl+F)</span>
<div class="a" style="left:875px;top:62.3px;width:11px;height:10.300px;border:1px solid #a9a59f;border-radius:2px;background:#f7f6f5"></div>
<svg style="left:875px;top:62.3px" width="11" height="10.300"><path d="M7.300 2.800V7.500L3.300 5.150z" fill="#8f8c87"/></svg>
<div class="a" style="left:893.7px;top:57.7px;width:20px;height:20px;border:1px solid #d0ccc6;border-radius:4px;background:linear-gradient(#fff,#f3f2f0)"></div>
<svg style="left:893.7px;top:57.7px" width="20" height="20"><rect x="5" y="5" width="10" height="10" rx="1.500" fill="#f7f6f5" stroke="#a9a59f" stroke-width="1"/><path d="M7.500 7.500L12.500 12.500M12.500 7.500L7.500 12.500" stroke="#8f8c87" stroke-width="1.700"/></svg>
<div class="a" style="left:587px;top:105px;width:322.700px;height:266px;border:1px solid #cfcbc5;border-radius:0 4px 4px 4px;background:#f6f5f4"></div>
<div class="a" style="left:587px;top:84.3px;width:55.800px;height:22px;border:1px solid #cfcbc5;border-bottom:none;border-radius:4.500px 4.500px 0 0;background:linear-gradient(#fdfdfc,#f6f5f4)"></div>
<div class="a" style="left:644.3px;top:86.5px;width:90px;height:18.500px;border:1px solid #cfcbc5;border-bottom:none;border-radius:4px 4px 0 0;background:linear-gradient(#f3f2f0,#e6e4e1)"></div>
<div class="a" style="left:736.3px;top:86.5px;width:77.500px;height:18.500px;border:1px solid #cfcbc5;border-bottom:none;border-radius:4px 4px 0 0;background:linear-gradient(#f3f2f0,#e6e4e1)"></div>
<svg style="left:0;top:0" width="979" height="440">
<defs>
<linearGradient id="tb1" x1="0" y1="0" x2="1" y2="1"><stop offset="0" stop-color="#7d9fcb"/><stop offset="1" stop-color="#e6edf6"/></linearGradient>
<linearGradient id="lg1" x1="0" y1="0" x2="1" y2="0"><stop offset="0" stop-color="#8fb0d8"/><stop offset="1" stop-color="#fdfeff"/></linearGradient>
<radialGradient id="rg1" cx=".5" cy=".55" r=".6"><stop offset="0" stop-color="#fff"/><stop offset="1" stop-color="#8fb0d8"/></radialGradient>
<radialGradient id="plg" cx=".5" cy=".35" r=".6"><stop offset="0" stop-color="#c8e262"/><stop offset="1" stop-color="#8ec23c"/></radialGradient>
<linearGradient id="hdg" x1="0" y1="0" x2="0" y2="1"><stop offset="0" stop-color="#fdfdfd"/><stop offset=".5" stop-color="#f7f7f6"/><stop offset="1" stop-color="#ecebe9"/></linearGradient>
<linearGradient id="rwg" x1="0" y1="0" x2="0" y2="1"><stop offset="0" stop-color="#edecea"/><stop offset="1" stop-color="#dcdbd9"/></linearGradient>
<linearGradient id="gp" x1="0" y1="0" x2="1" y2="0"><stop offset="0" stop-color="#ff0000"/><stop offset="1" stop-color="#ff0000" stop-opacity="0"/></linearGradient>
<pattern id="chk" x="595.700" y="191.700" width="11.540" height="11.400" patternUnits="userSpaceOnUse"><rect width="11.540" height="11.400" fill="#7e7c7c"/><rect x="5.770" width="5.770" height="5.700" fill="#c8c6c6"/><rect y="5.700" width="5.770" height="5.700" fill="#c8c6c6"/></pattern>
</defs>
<rect x="592.400" y="90.400" width="10.400" height="10.400" fill="url(#tb1)"/>
<rect x="649.600" y="91.200" width="10.400" height="9.800" fill="#efeeec" stroke="#bcb9b4" stroke-width="1"/><path d="M649.800 101V91.300H660.300" fill="none" stroke="#55534f" stroke-width="1.600"/><path d="M651 100V92.500H659.500" fill="none" stroke="#b9b7b3" stroke-width="1"/>
<g stroke="#222" stroke-width="1.300" fill="none"><path d="M741 93H749.500"/><path d="M741 96.800H752" stroke-dasharray="2 1.200"/><path d="M741 100.500H752"/></g><path d="M748.500 90.500L752.300 93L748.500 95.500z" fill="#222"/>
<!-- paint type row -->
<path d="M604.700 123.200L611.700 130.200M611.700 123.200L604.700 130.200" stroke="#111" stroke-width="2.100"/>
<rect x="627.500" y="119.500" width="15.500" height="15" fill="#8eb0d8" stroke="#4a4f57" stroke-width="1.200"/>
<rect x="649.200" y="113.500" width="27" height="26.500" rx="4" fill="#f6d9cd" stroke="#e89a7c" stroke-width="1.200"/>
<rect x="654.600" y="119.500" width="17.400" height="15" fill="url(#lg1)" stroke="#4a4f57" stroke-width="1.200"/>
<rect x="682.500" y="119.500" width="17" height="15" fill="url(#rg1)" stroke="#4a4f57" stroke-width="1.200"/>
<rect x="710.500" y="119.500" width="15.500" height="15" fill="#8eb0d8" stroke="#4a4f57" stroke-width="1.200"/>
<g fill="#fff"><circle cx="714.500" cy="123.500" r="2.300"/><circle cx="722" cy="123.500" r="2.300"/><circle cx="714.500" cy="130.700" r="2.300"/><circle cx="722" cy="130.700" r="2.300"/><circle cx="718.250" cy="127.100" r="1.800"/></g>
<rect x="739" y="119.500" width="14" height="14" fill="#fff" stroke="#4a4f57" stroke-width="1.200"/><path d="M739.500 134.300H753.800V120" fill="none" stroke="#8eb0d8" stroke-width="1.600"/>
<!-- fill rule -->
<rect x="858.300" y="113.500" width="20.400" height="26" rx="4" fill="#e9e7e4" stroke="#bab6af" stroke-width="1"/>
<path d="M865.90 122.20C863.70 122.60 863.10 126.50 864.30 129.80C865.80 133.90 873.00 133.90 874.50 129.80C875.70 126.50 875.10 122.60 872.90 122.20C871.10 121.90 870.20 123.00 869.40 124.40C868.60 123.00 867.70 121.90 865.90 122.20zM869.40 124.90C870.30 126.20 871.80 127.70 871.80 129.30C871.80 130.80 870.80 131.60 869.40 131.60C868.00 131.60 867.00 130.80 867.00 129.30C867.00 127.70 868.50 126.20 869.40 124.90z" fill="#0a0a0a" fill-rule="evenodd"/>
<path d="M887.90 121.20C885.70 121.60 885.10 125.50 886.30 128.80C887.80 132.90 895.00 132.90 896.50 128.80C897.70 125.50 897.10 121.60 894.90 121.20C893.10 120.90 892.20 122.00 891.40 123.40C890.60 122.00 889.70 120.90 887.90 121.20z" fill="#0a0a0a" fill-rule="evenodd"/>
<!-- table -->
<rect x="591.500" y="168.500" width="314.500" height="166" fill="#fff" stroke="#c5c1bb" stroke-width="1"/>
<rect x="592" y="169" width="313.500" height="20" fill="url(#hdg)"/>
<path d="M592 189.500H905.500" stroke="#c9c5bf" stroke-width="1"/>
<rect x="592" y="190" width="313.500" height="19.500" fill="url(#rwg)"/>
<path d="M661.500 169V189M832.500 169V189" stroke="#cbc8c3" stroke-width="1"/><path d="M662.500 169V189M833.500 169V189" stroke="#fff" stroke-width="1"/>
<path d="M661.500 190V209.500M832.500 190V209.500" stroke="#bdbab5" stroke-width="1"/><path d="M662.500 190V209.500M833.500 190V209.500" stroke="#f0efed" stroke-width="1"/>
<rect x="595.700" y="191.700" width="61.300" height="16.900" fill="url(#chk)"/>
<rect x="595.700" y="191.700" width="61.300" height="16.900" fill="url(#gp)"/>
<!-- plus -->
<path d="M602.700 346H607.800V350.700H612.800V355.900H607.800V360.600H602.700V355.900H597.700V350.700H602.700z" fill="url(#plg)" stroke="#7aad30" stroke-width="1" stroke-linejoin="round"/>
<!-- pencil -->
<path d="M631.7 361.5L643.7 358.7L635.7 359.2z" fill="#d9d8d6"/>
<path d="M629.30 356.41L639.66 346.26L642.88 349.54L632.52 359.69z" fill="#2e2e2e"/>
<path d="M631.13 357.56L641.13 347.76" stroke="#5a5a5a" stroke-width=".8"/>
<path d="M639.66 346.26L641.08 344.86C642.37 343.60 645.59 346.88 644.30 348.14L642.88 349.54z" fill="#e08fd0"/>
<path d="M639.08 346.82L639.94 345.98L643.16 349.26L642.30 350.10z" fill="#b9b9b9"/>
<path d="M627.70 361.20L629.30 356.41L632.52 359.69z" fill="#f0e28a"/>
<path d="M627.70 361.20L628.28 359.51L629.40 360.65z" fill="#222"/>
</svg>
<span class="t" style="left:608.30px;top:90px;font-size:11px;letter-spacing:-0.176px;">Täyttö</span>
<span class="t" style="left:665.70px;top:90px;font-size:11px;color:#6a6966;letter-spacing:-0.085px;">Viivan väritys</span>
<span class="t" style="left:757.30px;top:90px;font-size:11px;color:#6a6966;letter-spacing:-0.115px;">Viivan tyyli</span>
<span class="t" style="left:764.6px;top:116.5px;font-size:20px;font-weight:700;color:#111;font-family:'DejaVu Sans',sans-serif;transform:scaleX(1.18);transform-origin:0 0">?</span>
<div class="a" style="left:672.1px;top:134.4px;width:77.700px;height:18.200px;background:#111;border-radius:4.500px"></div>
<span class="t" style="left:675.80px;top:139px;font-size:11px;color:#fff;letter-spacing:-0.162px;">Suora liukuväri</span>
<span class="t" style="left:595.30px;top:149px;font-size:11px;font-weight:700;color:#3c3c3c;transform:scaleX(0.9488);transform-origin:0 0;">Linear gradient</span>
<span class="t" style="left:597.00px;top:174px;font-size:11px;letter-spacing:-0.129px;">Liukuväri</span>
<span class="t" style="left:666.50px;top:174px;font-size:11px;transform:scaleX(0.9636);transform-origin:0 0;">Nimi</span>
<span class="t" style="left:838.50px;top:174px;font-size:11px;">#</span>
<span class="t" style="left:665.40px;top:195px;font-size:11px;transform:scaleX(0.9353);transform-origin:0 0;">4172</span>
<span class="t" style="left:838.80px;top:195px;font-size:11px;">1</span>
<div class="spin" style="left:588.5px;top:376.5px;width:320.3px;height:19.5px;border-radius:4px"><div class="sp" style="width:15.5px"></div><svg style="left:-1px;top:-1px" width="320.3" height="19.5"><path d="M309.3 7.5L312.6 4.4L315.9 7.5z" fill="#4a4a4a"/><path d="M309.3 12.3L312.6 15.4L315.9 12.3z" fill="#c4c2be"/></svg></div>
<span class="t" style="left:595.30px;top:381px;font-size:11px;transform:scaleX(0.9362);transform-origin:0 0;">Blur (%)</span>
<span class="t" style="left:873.50px;top:381px;font-size:11px;transform:scaleX(0.9283);transform-origin:0 0;">0,0</span>
<div class="spin" style="left:588.5px;top:402.2px;width:320.3px;height:19.5px;border-radius:4px"><div class="sp" style="width:15.5px"></div><svg style="left:-1px;top:-1px" width="320.3" height="19.5"><path d="M309.3 7.5L312.6 4.4L315.9 7.5z" fill="#c4c2be"/><path d="M309.3 12.3L312.6 15.4L315.9 12.3z" fill="#4a4a4a"/></svg></div>
<div class="a" style="left:592.9px;top:405.900px;width:294.900px;height:12px;background:#f07746;border-radius:2.500px"></div>
<span class="t" style="left:595.30px;top:407px;font-size:11px;color:#fff;transform:scaleX(0.9396);transform-origin:0 0;">Opacity (%)</span>
<span class="t" style="left:862.50px;top:407px;font-size:11px;color:#fff;transform:scaleX(0.9117);transform-origin:0 0;">100,0</span>
<svg style="left:744.5px;top:431px" width="8" height="5"><path d="M1.500 0.500V4M3.500 0.500V4M5.500 0.500V4" stroke="#c2beb8" stroke-width="1" shape-rendering="crispEdges"/></svg>
<div class="hsep" style="left:925px;top:174.0px;width:17px"></div>
<div class="hsep" style="left:925px;top:242.8px;width:17px"></div>
<div class="hsep" style="left:925px;top:311.3px;width:17px"></div>
<div class="hsep" style="left:925px;top:408.8px;width:17px"></div>
<div class="hsep" style="left:925px;top:505.8px;width:17px"></div>
<div class="hsep" style="left:925px;top:602.8px;width:17px"></div>
<div class="hsep" style="left:925px;top:671.8px;width:17px"></div>
<div class="hsep" style="left:955px;top:88.2px;width:17px"></div>
<div class="hsep" style="left:955px;top:242.8px;width:17px"></div>
<div class="hsep" style="left:955px;top:426.1px;width:17px"></div>
<div class="hsep" style="left:955px;top:551.8px;width:17px"></div>
<div class="btn" style="left:950.3px;top:56.2px;width:26.400px;height:26.3px;border-radius:4.500px"></div>
<div class="btn" style="left:950.3px;top:250.7px;width:26.400px;height:25.9px;border-radius:4.500px"></div>
<div class="btn" style="left:950.3px;top:433.6px;width:26.400px;height:25.8px;border-radius:4.500px"></div>
<div class="btn" style="left:950.3px;top:588.3px;width:26.400px;height:25.9px;border-radius:4.500px"></div>
<div class="btn" style="left:950.3px;top:616.4px;width:26.400px;height:25.9px;border-radius:4.500px"></div>
<svg style="left:0;top:0" width="979" height="730">
<defs>
<linearGradient id="fo" x1="0" y1="0" x2="0" y2="1"><stop offset="0" stop-color="#f89a6a"/><stop offset="1" stop-color="#e04a1c"/></linearGradient>
<linearGradient id="ga" x1="0" y1="0" x2="0" y2="1"><stop offset="0" stop-color="#a4d84a"/><stop offset="1" stop-color="#5c9e1a"/></linearGradient>
<linearGradient id="dr" x1="0" y1="0" x2="0" y2="1"><stop offset="0" stop-color="#e4e4e4"/><stop offset=".7" stop-color="#b8b8b8"/><stop offset="1" stop-color="#6a6a6a"/></linearGradient>
<linearGradient id="ua" x1="0" y1="0" x2="0" y2="1"><stop offset="0" stop-color="#f7a65c"/><stop offset="1" stop-color="#e2621a"/></linearGradient>
<radialGradient id="zl" cx=".4" cy=".35" r=".75"><stop offset="0" stop-color="#f2f6fb"/><stop offset="1" stop-color="#a9c2dc"/></radialGradient>
<linearGradient id="bs" x1="0" y1="0" x2="1" y2="1"><stop offset="0" stop-color="#d4e2f1"/><stop offset="1" stop-color="#9bb9d8"/></linearGradient>
<linearGradient id="pg" x1="0" y1="0" x2="1" y2="1"><stop offset=".3" stop-color="#fff"/><stop offset="1" stop-color="#b9b9b9"/></linearGradient>
</defs><path d="M926.300 61.700H936.800L941.300 66V77.500H926.300z" fill="#f6f6f5" stroke="#c2c0bc" stroke-width="1"/><path d="M936.800 61.700V66H941.300" fill="#e4e3e1" stroke="#c2c0bc" stroke-width=".8"/><path d="M936.300 69.500H939.700V72.300H942.500V75.700H939.700V78.500H936.300V75.700H933.500V72.300H936.300z" fill="#7fc02e" stroke="#4e8a14" stroke-width=".9"/><path d="M927.500 91H937L940.500 94.500V104H927.500z" fill="#f4f3f2" stroke="#bdbab6" stroke-width=".9"/><path d="M925.500 93.500H929.500L930.500 95H934V104H925.500z" fill="#d8c8b8" stroke="#a89888" stroke-width=".7"/><path d="M925.300 97.200H942L941.500 106H925.800z" fill="url(#fo)" stroke="#c8431a" stroke-width=".8"/><path d="M927.500 119H939.500L942 129V134.500H925V129z" fill="url(#dr)" stroke="#8a8a8a" stroke-width=".8"/><path d="M925.500 130H941.500V134H925.500z" fill="#5c5c5c"/><path d="M925.500 129.500H941.500" stroke="#eee" stroke-width=".8"/><path d="M931 118H936V123H939.500L933.500 129.500L927.500 123H931z" fill="url(#ga)" stroke="#4e8a14" stroke-width=".9"/><path d="M928.500 147H938.500V153H928.500z" fill="#f7f7f7" stroke="#9a9a9a" stroke-width=".9"/><path d="M925.500 152.500H941.500V161H925.500z" fill="#dcdcdc" stroke="#777" stroke-width=".9"/><path d="M927.500 156H939.500V159.500H927.500z" fill="#3a3a3a"/><path d="M927.500 159.500H939.500V163H927.500z" fill="#f4f4f4" stroke="#888" stroke-width=".8"/><path d="M932 149.500L933.500 151L935 149.500z" fill="#888"/><circle cx="940" cy="158.300" r=".7" fill="#6c3"/><path d="M926.300 187.300H936.300L940.500 191.300V202.700H926.300z" fill="#f3f3f2" stroke="#bdbab6" stroke-width="1"/><path d="M936.300 187.300V191.300H940.500" fill="#e0dfdd" stroke="#bdbab6" stroke-width=".8"/><path d="M925.300 193.700H932V191.500L937.300 196L932 200.500V198.300H925.300z" fill="#5b9bd8" stroke="#3a78b8" stroke-width=".8"/><path d="M926 215.700H936.300L940.500 219.700V232H926z" fill="#f0efee" stroke="#b5b2ae" stroke-width="1"/><path d="M927.500 218.500H935M927.500 221H938.500M927.500 223.500H938.500M927.500 226H938.500M927.500 228.500H938.500" stroke="#d3c4bc" stroke-width="1.100"/><path d="M927.500 218H934" stroke="#e0a898" stroke-width="1.300"/><path d="M930.500 222.300H936.500V220L942 224.500L936.500 229V226.700H930.500z" fill="#dd78d6" stroke="#b955b2" stroke-width=".8"/><path d="M924.300 263.500L932.300 256.700V260.300C938 260 941.800 263 942 268.500C942 269.500 941.500 270.300 940.800 270.300C939.500 267.300 937 266.300 932.300 266.800V270.300z" fill="url(#ua)" stroke="#d4591a" stroke-width=".6"/><path d="M942.300 292.500L934.300 285.700V289.300C928.600 289 924.800 292 924.600 297.500C924.600 298.500 925.100 299.300 925.800 299.300C927.100 296.300 929.600 295.300 934.300 295.800V299.300z" fill="#e2e3e1" stroke="#d2d3d1" stroke-width=".6"/><g fill="#e7e7e6" stroke="#a9a9a7" stroke-width="1"><rect x="925.800" y="324.500" width="10.500" height="11.300"/><rect x="930.500" y="329.800" width="10.300" height="10.700"/></g><path d="M927.500 327H934.500M927.500 329.300H934.500M927.500 331.600H930M932.300 333H939M932.300 335.300H939M932.300 337.600H939" stroke="#c2c2c0" stroke-width=".9"/><path d="M929 352.800L935.200 365.500M938 352.800L931.800 365.500" stroke="#9a9a9a" stroke-width="2" stroke-linecap="round"/><path d="M929.300 353L934.800 364M937.700 353L932.200 364" stroke="#e4e4e4" stroke-width=".8"/><ellipse cx="929.600" cy="366.500" rx="2.300" ry="2.800" fill="none" stroke="#d23a3a" stroke-width="1.700" transform="rotate(25 929.600 366.500)"/><ellipse cx="937.400" cy="366.500" rx="2.300" ry="2.800" fill="none" stroke="#d23a3a" stroke-width="1.700" transform="rotate(-25 937.400 366.500)"/><rect x="925.500" y="382.300" width="11.300" height="13" rx="1" fill="#c9a47a" stroke="#a88a66" stroke-width=".9"/><rect x="929" y="380.800" width="4.500" height="3" fill="#d8d8d8" stroke="#8a8a8a" stroke-width=".8"/><rect x="930.500" y="386" width="10.500" height="11.300" fill="#ececeb" stroke="#a9a9a7" stroke-width="1"/><path d="M932.300 389.500H939M932.300 391.800H939M932.300 394.100H939" stroke="#c2c2c0" stroke-width=".9"/><path d="M938.300 434.1L941 436.8" stroke="#111" stroke-width="2.800" stroke-linecap="round"/><circle cx="933" cy="428.6" r="7.500" fill="url(#zl)" stroke="#23272b" stroke-width="1.500"/><path d="M938.300 462.9L941 465.59999999999997" stroke="#111" stroke-width="2.800" stroke-linecap="round"/><circle cx="933" cy="457.4" r="7.500" fill="url(#zl)" stroke="#23272b" stroke-width="1.500"/><path d="M938.300 491.5L941 494.2" stroke="#111" stroke-width="2.800" stroke-linecap="round"/><circle cx="933" cy="486" r="7.500" fill="url(#zl)" stroke="#23272b" stroke-width="1.500"/><rect x="928.300" y="425.300" width="9.300" height="6.800" fill="#fff" stroke="#222" stroke-width="1" stroke-dasharray="1.500 1"/><rect x="929" y="453.300" width="5" height="5" fill="#f7d64a" stroke="#5a4a10" stroke-width=".8"/><rect x="932" y="456.300" width="5" height="5" fill="#f7d64a" stroke="#5a4a10" stroke-width=".8"/><rect x="930" y="481.800" width="6.500" height="8.400" fill="url(#pg)" stroke="#333" stroke-width="1"/><rect x="925.500" y="518.7" width="9.300" height="8.800" fill="url(#bs)" stroke="#3e566e" stroke-width="1"/><rect x="929" y="522.0" width="12.500" height="12.700" fill="url(#bs)" stroke="#3e566e" stroke-width="1"/><rect x="925.500" y="547.2" width="9.300" height="8.800" fill="url(#bs)" stroke="#3e566e" stroke-width="1"/><rect x="929" y="550.5" width="12.500" height="12.700" fill="url(#bs)" stroke="#3e566e" stroke-width="1"/><rect x="925.500" y="576" width="9.300" height="8.800" fill="url(#bs)" stroke="#3e566e" stroke-width="1"/><rect x="929" y="579.3" width="12.500" height="12.700" fill="url(#bs)" stroke="#3e566e" stroke-width="1"/><path d="M932.800 556.500V555C932.800 552.800 936.700 552.800 936.700 555V556.500" fill="none" stroke="#555" stroke-width="1"/><rect x="931.500" y="556.200" width="6.500" height="4.800" fill="#f5c83a" stroke="#6a5a1e" stroke-width=".8"/><path d="M932.800 585.500V583.500C932.800 581.300 936.700 581.300 936.700 583.500" fill="none" stroke="#555" stroke-width="1"/><rect x="931.500" y="585" width="6.500" height="4.800" fill="#7cc04a" stroke="#3e6a1e" stroke-width=".8"/><rect x="927.500" y="621.800" width="9" height="8" fill="#b8cee6" stroke="#3e566e" stroke-width="1"/><circle cx="935.800" cy="620.800" r="4.300" fill="#b8cee6" stroke="#3e566e" stroke-width="1"/><g fill="#111"><rect x="924.500" y="615" width="2" height="2"/><rect x="939.700" y="615" width="2" height="2"/><rect x="924.500" y="630.300" width="2" height="2"/><rect x="939.700" y="630.300" width="2" height="2"/></g><rect x="928" y="651.800" width="8.500" height="6.500" fill="#f5cf3a" stroke="#5a4a10" stroke-width="1"/><circle cx="935.500" cy="649.300" r="4.300" fill="#b8cee6" stroke="#3e566e" stroke-width="1"/><g fill="#111"><rect x="924.500" y="648.500" width="1.800" height="1.800"/><rect x="930" y="643.800" width="1.800" height="1.800"/><rect x="940" y="643.800" width="1.800" height="1.800"/><rect x="940" y="654" width="1.800" height="1.800"/><rect x="924.500" y="659.500" width="1.800" height="1.800"/><rect x="936.500" y="659.500" width="1.800" height="1.800"/><rect x="929.700" y="654.500" width="1.600" height="1.600"/></g><path d="M931.500 706.500L936.500 710.500L931.500 714.500z" fill="#8c8a86"/><path d="M959.8 65.7L966.0 72.1" stroke="#111" stroke-width="1.400" fill="none"/><path d="M967.7 73.8L963.5 72.2L966.1 69.6z" fill="#111"/><path d="M958.3 61.400000000000006L961.0999999999999 64.2L958.3 67.0L955.5 64.2z" fill="#b8b8ff" stroke="#1818f0" stroke-width="1.300"/><path d="M969.3 72.6L972.0999999999999 75.39999999999999L969.3 78.19999999999999L966.5 75.39999999999999z" fill="#c9d6e8" stroke="#1e8a2a" stroke-width="1.300"/><path d="M959.5 104.9L965.7 111.3" stroke="#111" stroke-width="1.400" fill="none"/><path d="M967.4 113.0L963.2 111.4L965.8 108.8z" fill="#111"/><path d="M958.0 100.60000000000001L960.8 103.4L958.0 106.2L955.2 103.4z" fill="#b8b8ff" stroke="#1818f0" stroke-width="1.300"/><path d="M969.0 111.8L971.8 114.6L969.0 117.39999999999999L966.2 114.6z" fill="#c9d6e8" stroke="#1e8a2a" stroke-width="1.300"/><path d="M959.8 259.5L966.0 265.90000000000003" stroke="#111" stroke-width="1.400" fill="none"/><path d="M967.7 267.6L963.5 266.0L966.1 263.4z" fill="#111"/><path d="M958.3 255.2L961.0999999999999 258.0L958.3 260.8L955.5 258.0z" fill="#b8b8ff" stroke="#1818f0" stroke-width="1.300"/><path d="M969.3 266.40000000000003L972.0999999999999 269.20000000000005L969.3 272.00000000000006L966.5 269.20000000000005z" fill="#c9d6e8" stroke="#1e8a2a" stroke-width="1.300"/><path d="M959.8 442.4L966.0 448.8" stroke="#111" stroke-width="1.400" fill="none"/><path d="M967.7 450.5L963.5 448.9L966.1 446.3z" fill="#111"/><path d="M958.3 438.09999999999997L961.0999999999999 440.9L958.3 443.7L955.5 440.9z" fill="#b8b8ff" stroke="#1818f0" stroke-width="1.300"/><path d="M969.3 449.3L972.0999999999999 452.1L969.3 454.90000000000003L966.5 452.1z" fill="#c9d6e8" stroke="#1e8a2a" stroke-width="1.300"/><g fill="none" stroke="#b9b8b6" stroke-width="1.200" stroke-dasharray="1.500 1.200"><path d="M970 129.500V143.700H955.800"/><path d="M969 158.700V172H955"/><path d="M968.700 187.700V200.500H955"/><path d="M969.700 216V229.300H956"/></g><circle cx="969" cy="172" r="2" fill="#d8d8d6" stroke="#b9b8b6" stroke-width=".9"/><path d="M968.700 189L970.700 191.800L968.700 194.600L966.700 191.800z" fill="#d8d8d6" stroke="#b9b8b6" stroke-width=".9"/><circle cx="959.700" cy="219.800" r="1.800" fill="#e4e4e2" stroke="#b9b8b6" stroke-width=".9"/><path d="M956.300 285.200C962 286 966.500 290 965.300 298.300C969 297 971 295 971.800 292.500" fill="none" stroke="#1e7a1e" stroke-width="1.800"/><path d="M956.200 322.700L971.800 318.200M956.200 328.500L971.800 313" stroke="#333" stroke-width="1.100"/><circle cx="963.800" cy="320.700" r="2.400" fill="#6a5acd" stroke="#1e8a2a" stroke-width="1.300"/><path d="M955.500 341.700C962 342.500 966 346 966.500 352.500C968.500 351.500 969.800 350 970.300 348" fill="none" stroke="#444" stroke-width="1.100"/><path d="M963 351.500L966 354.500L963 357.500L960 354.500z" fill="#a9a9f0" stroke="#1e8a2a" stroke-width="1.300"/><path d="M955.500 370.300C958.500 370.300 960.500 371 963.300 372.800C966 375 965 380 963.300 382.500C967 382.300 970 380.500 971.300 377.300" fill="none" stroke="#444" stroke-width="1.100"/><rect x="961" y="370.500" width="4.600" height="4.600" fill="#a9a9f0" stroke="#1e8a2a" stroke-width="1.300"/><path d="M956 414.800L971.500 400" stroke="#333" stroke-width="1.100"/><path d="M957.300 415.500L959.500 409.500M959.800 413.500L962 407.500M965.500 407.500L967.700 401.500M968 405.500L970.200 399.500" stroke="#d42020" stroke-width="1.300"/><circle cx="963.800" cy="407.500" r="2.300" fill="#6a5acd" stroke="#1e8a2a" stroke-width="1.300"/><path d="M969.200 466.800V479.800H955" fill="none" stroke="#8a8a88" stroke-width="1.200"/><circle cx="961.300" cy="472.300" r="1.600" fill="#c8e8c8" stroke="#1e8a2a" stroke-width="1.200"/><path d="M957.300 501H964.300M960.800 497.500V504.500" stroke="#222" stroke-width="1.300"/><path d="M969.200 495.700V509H956" fill="none" stroke="#333" stroke-width="1.300" stroke-dasharray="1.500 1.100"/><path d="M956 537.500H972" stroke="#2a9a2a" stroke-width="1.300"/><path d="M958 535L960.700 537.700L958 540.400L955.300 537.700z" fill="#b8b8f0" stroke="#1e8a2a" stroke-width="1.100"/><rect x="957.800" y="565.600" width="11.200" height="14.500" fill="url(#pg)" stroke="#2a2a2a" stroke-width="1.400"/><path d="M958.700 593.300V610M963.200 593.300V610M967.700 593.300V610M972.200 593.300V610M956.300 595.800H973.500M956.300 600.400H973.500M956.300 605H973.500M956.300 609.300H973.500" stroke="#2222ee" stroke-width="1.400" fill="none"/><path d="M956.800 622.500V638.300M963.300 638.300L968.300 622.500M970.600 622.500V638.300" stroke="#3030f0" stroke-width="1.600" fill="none"/></svg>
<span class="t" style="left:959.40px;top:523px;font-size:17.2px;font-weight:700;color:#0a0a0a;text-shadow:0.3px 0 0 #0a0a0a;">A</span>
<svg style="left:0;top:726.6px" width="979" height="16" shape-rendering="crispEdges"><rect x="16.50" y="0" width="15.75" height="15.300" fill="#000000"/><rect x="31.75" y="0" width="15.75" height="15.300" fill="#1a1a1a"/><rect x="47.00" y="0" width="15.75" height="15.300" fill="#333333"/><rect x="62.25" y="0" width="15.75" height="15.300" fill="#4d4d4d"/><rect x="77.50" y="0" width="15.75" height="15.300" fill="#666666"/><rect x="92.75" y="0" width="15.75" height="15.300" fill="#808080"/><rect x="108.00" y="0" width="15.75" height="15.300" fill="#999999"/><rect x="123.25" y="0" width="15.75" height="15.300" fill="#b3b3b3"/><rect x="138.50" y="0" width="15.75" height="15.300" fill="#cccccc"/><rect x="153.75" y="0" width="15.75" height="15.300" fill="#e6e6e6"/><rect x="169.00" y="0" width="15.75" height="15.300" fill="#ececec"/><rect x="184.25" y="0" width="15.75" height="15.300" fill="#f2f2f2"/><rect x="199.50" y="0" width="15.75" height="15.300" fill="#f9f9f9"/><rect x="214.75" y="0" width="15.75" height="15.300" fill="#ffffff"/><rect x="230.00" y="0" width="15.75" height="15.300" fill="#800000"/><rect x="245.25" y="0" width="15.75" height="15.300" fill="#ff0000"/><rect x="260.50" y="0" width="15.75" height="15.300" fill="#808000"/><rect x="275.75" y="0" width="15.75" height="15.300" fill="#ffff00"/><rect x="291.00" y="0" width="15.75" height="15.300" fill="#008000"/><rect x="306.25" y="0" width="15.75" height="15.300" fill="#00ff00"/><rect x="321.50" y="0" width="15.75" height="15.300" fill="#008080"/><rect x="336.75" y="0" width="15.75" height="15.300" fill="#00ffff"/><rect x="352.00" y="0" width="15.75" height="15.300" fill="#000080"/><rect x="367.25" y="0" width="15.75" height="15.300" fill="#0000ff"/><rect x="382.50" y="0" width="15.75" height="15.300" fill="#800080"/><rect x="397.75" y="0" width="15.75" height="15.300" fill="#ff00ff"/><rect x="413.00" y="0" width="15.75" height="15.300" fill="#2b0000"/><rect x="428.25" y="0" width="15.75" height="15.300" fill="#550000"/><rect x="443.50" y="0" width="15.75" height="15.300" fill="#800000"/><rect x="458.75" y="0" width="15.75" height="15.300" fill="#aa0000"/><rect x="474.00" y="0" width="15.75" height="15.300" fill="#d40000"/><rect x="489.25" y="0" width="15.75" height="15.300" fill="#ff0000"/><rect x="504.50" y="0" width="15.75" height="15.300" fill="#ff2a2a"/><rect x="519.75" y="0" width="15.75" height="15.300" fill="#ff5555"/><rect x="535.00" y="0" width="15.75" height="15.300" fill="#ff8080"/><rect x="550.25" y="0" width="15.75" height="15.300" fill="#ffaaaa"/><rect x="565.50" y="0" width="15.75" height="15.300" fill="#ffd5d5"/><rect x="580.75" y="0" width="15.75" height="15.300" fill="#280b0b"/><rect x="596.00" y="0" width="15.75" height="15.300" fill="#501616"/><rect x="611.25" y="0" width="15.75" height="15.300" fill="#782121"/><rect x="626.50" y="0" width="15.75" height="15.300" fill="#a02c2c"/><rect x="641.75" y="0" width="15.75" height="15.300" fill="#c83737"/><rect x="657.00" y="0" width="15.75" height="15.300" fill="#d35f5f"/><rect x="672.25" y="0" width="15.75" height="15.300" fill="#de8787"/><rect x="687.50" y="0" width="15.75" height="15.300" fill="#e9afaf"/><rect x="702.75" y="0" width="15.75" height="15.300" fill="#f4d7d7"/><rect x="718.00" y="0" width="15.75" height="15.300" fill="#241c1c"/><rect x="733.25" y="0" width="15.75" height="15.300" fill="#483737"/><rect x="748.50" y="0" width="15.75" height="15.300" fill="#6c5353"/><rect x="763.75" y="0" width="15.75" height="15.300" fill="#916f6f"/><rect x="779.00" y="0" width="15.75" height="15.300" fill="#ac9393"/><rect x="794.25" y="0" width="15.75" height="15.300" fill="#c8b7b7"/><rect x="809.50" y="0" width="15.75" height="15.300" fill="#e3dbdb"/><rect x="824.75" y="0" width="15.75" height="15.300" fill="#2b1100"/><rect x="840.00" y="0" width="15.75" height="15.300" fill="#552200"/><rect x="855.25" y="0" width="15.75" height="15.300" fill="#803300"/><rect x="870.50" y="0" width="15.75" height="15.300" fill="#aa4400"/><rect x="885.75" y="0" width="15.75" height="15.300" fill="#d45500"/><rect x="901.00" y="0" width="15.75" height="15.300" fill="#ff6600"/><rect x="916.25" y="0" width="15.75" height="15.300" fill="#ff7f2a"/><rect x="931.50" y="0" width="15.75" height="15.300" fill="#ff9955"/><rect x="946.75" y="0" width="15.75" height="15.300" fill="#ffb380"/><rect x="962.00" y="0" width="5.00" height="15.300" fill="#ffccaa"/></svg>
<div class="a" style="left:0;top:726.6px;width:16.500px;height:15.300px;background:#fff"></div>
<div class="a" style="left:0;top:726px;width:967px;height:1px;background:rgba(60,50,40,.28)"></div>
<svg style="left:0;top:726.6px" width="17" height="15"><path d="M1 0.500L15.500 14.200M15.500 0.500L1 14.200" stroke="#8a1010" stroke-width="1.500"/></svg>
<svg style="left:970px;top:728px" width="8" height="10"><path d="M6 1.200V7.400L1.400 4.300z" fill="#6a6863"/></svg>
<div class="a" style="left:0;top:740.3px;width:141px;height:2.200px;background:#f07746"></div>
<span class="t" style="left:2.70px;top:745px;font-size:9.2px;letter-spacing:-0.149px;">Täyttö:</span>
<span class="t" style="left:2.70px;top:756px;font-size:9.2px;transform:scaleX(0.9188);transform-origin:0 0;">Viiva:</span>
<span class="t" style="left:40.00px;top:745px;font-size:8.8px;font-weight:700;color:#222;">L</span>
<svg style="left:0;top:742px" width="130" height="25"><defs>
<linearGradient id="fg2" x1="0" y1="0" x2="1" y2="0"><stop offset="0" stop-color="#ff0000"/><stop offset="1" stop-color="#ff0000" stop-opacity="0"/></linearGradient>
<pattern id="chk2" x="52" y="1" width="11.200" height="11" patternUnits="userSpaceOnUse"><rect width="11.200" height="11" fill="#bdbdbd"/><rect x="5.600" width="5.600" height="5.500" fill="#7c7c7c"/><rect y="5.500" width="5.600" height="5.500" fill="#7c7c7c"/></pattern></defs>
<rect x="52" y="1" width="67.300" height="10.800" fill="url(#chk2)"/><rect x="52" y="1" width="67.300" height="10.800" fill="url(#fg2)"/>
<rect x="33" y="12.600" width="68" height="12.400" fill="#000"/></svg>
<span class="t" style="left:103.60px;top:756px;font-size:9.2px;transform:scaleX(0.8161);transform-origin:0 0;">2,03</span>
<span class="t" style="left:123.10px;top:750px;font-size:9.6px;transform:scaleX(0.8382);transform-origin:0 0;">O:</span>
<div class="spin" style="left:134.6px;top:746.3px;width:42.6px;height:16.3px;border-radius:3.5px"><div class="sp" style="width:12.5px"></div><svg style="left:-1px;top:-1px" width="42.6" height="16.3"><path d="M33.5 7.2L36.4 4.7L39.3 7.2z" fill="#c4c2be"/><path d="M33.5 10.2L36.4 12.7L39.3 10.2z" fill="#4a4a4a"/></svg></div>
<span class="t" style="left:139.70px;top:750px;font-size:9.6px;transform:scaleX(0.8429);transform-origin:0 0;">100</span>
<div class="sep" style="left:181.300px;top:745px;height:19px"></div>
<svg style="left:0;top:0" width="979" height="767">
<path d="M187.200 754.300C189.500 750.800 195 750.800 197.300 754.300C195 757.800 189.500 757.800 187.200 754.300z" fill="#fff" stroke="#111" stroke-width="1.300"/><circle cx="192.300" cy="754.400" r="2.300" fill="#111"/><circle cx="191.500" cy="753.600" r=".7" fill="#fff"/>
<path d="M188.300 750.300L189.600 752M190.800 749.200L191.400 751.300M193.800 749.200L193.200 751.300M196.300 750.300L195 752" stroke="#111" stroke-width="1.200"/>
<path d="M207.300 750.600C208.500 749 212 748.900 212.600 750.800L213.300 753.600" fill="none" stroke="#4a4a48" stroke-width="1.300"/>
<path d="M206 753.800L213.800 753.100L214.600 758.800L206.800 759.600z" fill="url(#lk)" stroke="#3c3a30" stroke-width="1.100" stroke-linejoin="round"/>
<path d="M209.300 755H211.100L210.400 757.600z" fill="#222"/>
</svg>
<div class="a" style="left:219.700px;top:744.500px;width:65.800px;height:21px;border:1px solid #b9b5ae;border-radius:4px;background:linear-gradient(#fdfdfc,#ebe9e6)"></div>
<span class="t" style="left:225.60px;top:751px;font-size:8.8px;font-weight:700;color:#333;transform:scaleX(0.9374);transform-origin:0 0;">•Taso 1</span>
<svg style="left:272px;top:749.500px" width="8" height="14"><path d="M0.600 4.800L4 1.400L7.400 4.800zM0.600 9L4 12.400L7.400 9z" fill="#4c4c4c"/></svg>
<span class="t" style="left:292.40px;top:750px;font-size:10px;font-weight:700;transform:scaleX(0.9642);transform-origin:0 0;">Ellipsi</span>
<span class="t" style="left:327.40px;top:750px;font-size:10px;transform:scaleX(1.0367);transform-origin:0 0;">taso</span>
<span class="t" style="left:350.30px;top:750px;font-size:10px;font-weight:700;transform:scaleX(0.9503);transform-origin:0 0;">Taso 1</span>
<span class="t" style="left:379.70px;top:750px;font-size:10px;transform:scaleX(1.0686);transform-origin:0 0;">. Napsauta valintaa saadaksesi kahvat kiertoon tai koon muutokseen.</span>
<span class="t" style="left:848.20px;top:745px;font-size:9px;font-family:'Liberation Mono',monospace;transform:scaleX(0.7954);transform-origin:0 0;">X:</span>
<span class="t" style="left:848.20px;top:754px;font-size:9px;font-family:'Liberation Mono',monospace;transform:scaleX(0.7954);transform-origin:0 0;">Y:</span>
<span class="t" style="left:863.20px;top:745px;font-size:9px;font-family:'Liberation Mono',monospace;transform:scaleX(0.8671);transform-origin:0 0;">823,52</span>
<span class="t" style="left:863.20px;top:754px;font-size:9px;font-family:'Liberation Mono',monospace;transform:scaleX(0.8671);transform-origin:0 0;">623,68</span>
<span class="t" style="left:898.20px;top:749px;font-size:9.3px;transform:scaleX(0.8227);transform-origin:0 0;">Z:</span>
<div class="spin" style="left:907.9px;top:744.3px;width:51.1px;height:16.3px;border-radius:3.5px"><div class="sp" style="width:13px"></div><svg style="left:-1px;top:-1px" width="51.1" height="16.3"><path d="M41.8 7.2L44.7 4.7L47.6 7.2z" fill="#4a4a4a"/><path d="M41.8 10.2L44.7 12.7L47.6 10.2z" fill="#4a4a4a"/></svg></div>
<span class="t" style="left:916.00px;top:749px;font-size:9.2px;transform:scaleX(0.9244);transform-origin:0 0;">62%</span>
<svg style="left:963px;top:753px" width="16" height="14"><g fill="#c9c5bf"><rect x="12" y="10" width="1.500" height="1.500"/><rect x="9" y="10" width="1.500" height="1.500"/><rect x="6" y="10" width="1.500" height="1.500"/><rect x="12" y="7" width="1.500" height="1.500"/><rect x="9" y="7" width="1.500" height="1.500"/><rect x="12" y="4" width="1.500" height="1.500"/></g></svg>
<div class="sep" style="left:845.500px;top:744px;height:17px;background:#e3e1dd"></div>
</body></html>
